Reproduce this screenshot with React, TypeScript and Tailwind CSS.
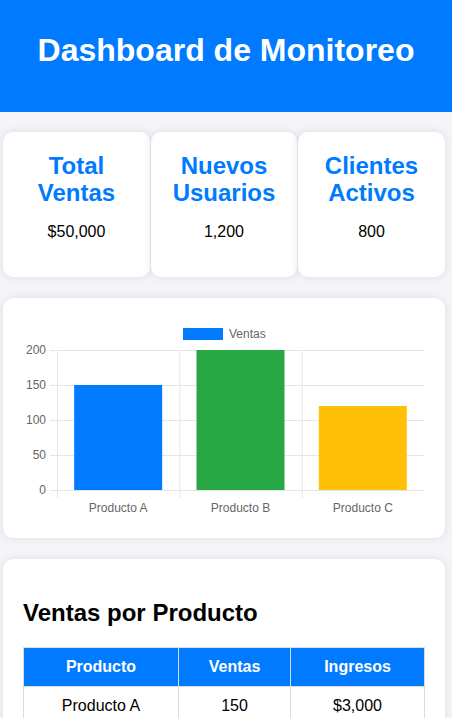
import React from 'react';

const stats = [
  { title: ['Total', 'Ventas'], value: '$50,000', width: 'w-[147px]' },
  { title: ['Nuevos', 'Usuarios'], value: '1,200', width: 'w-[146px]' },
  { title: ['Clientes', 'Activos'], value: '800', width: 'w-[147px]' },
];

const products = [
  { name: 'Producto A', sales: 150, revenue: '$3,000', color: '#007bff' },
  { name: 'Producto B', sales: 200, revenue: '$4,000', color: '#28a745' },
  { name: 'Producto C', sales: 120, revenue: '$2,400', color: '#ffc107' },
];

const StatCard: React.FC<{ title: string[]; value: string; width: string }> = ({ title, value, width }) => (
  <div className={`${width} bg-white rounded-[10px] shadow-[0_0_10px_rgba(0,0,0,0.1)] pt-5 pb-5 text-center`}>
    <h3 className="text-[24px] leading-[27.6px] font-bold text-[#007bff] mb-4">
      {title[0]}
      <br />
      {title[1]}
    </h3>
    <p className="text-[16px] leading-[18.4px] text-black mb-4">{value}</p>
  </div>
);

// chart coordinates are relative to the 402x200 canvas
const SalesChart: React.FC = () => {
  const left = 34;
  const right = 401;
  const top = 32;
  const bottom = 172;
  const colW = (right - left) / 3;
  const yFor = (v: number) => bottom - (v / 200) * (bottom - top);
  const ticks = [0, 50, 100, 150, 200];

  return (
    <svg width="402" height="200" viewBox="0 0 402 200" className="block">
      {/* legend */}
      <rect x="160" y="10" width="40" height="12" fill="#007bff" />
      <text x="206" y="20" fontSize="12" fill="#666" fontFamily="'Liberation Sans', Arial, sans-serif">
        Ventas
      </text>

      {/* horizontal grid */}
      {ticks.map((t) => (
        <g key={t}>
          <line x1={left - 7} x2={right} y1={yFor(t) + 0.5} y2={yFor(t) + 0.5} stroke="#e5e5e5" strokeWidth="1" />
          <text
            x={left - 11}
            y={yFor(t) + 4}
            fontSize="12"
            fill="#666"
            textAnchor="end"
            fontFamily="'Liberation Sans', Arial, sans-serif"
          >
            {t}
          </text>
        </g>
      ))}

      {/* vertical grid */}
      {[0, 1, 2].map((i) => (
        <line
          key={i}
          x1={left + i * colW + 0.5}
          x2={left + i * colW + 0.5}
          y1={top}
          y2={bottom + 8}
          stroke="#e5e5e5"
          strokeWidth="1"
        />
      ))}

      {products.map((p, i) => {
        const cx = left + colW * i + colW / 2;
        const y = yFor(p.sales);
        return (
          <g key={p.name}>
            <rect x={cx - 44} y={y} width="88" height={bottom - y} fill={p.color} />
            <text
              x={cx}
              y={bottom + 22}
              fontSize="12"
              fill="#666"
              textAnchor="middle"
              fontFamily="'Liberation Sans', Arial, sans-serif"
            >
              {p.name}
            </text>
          </g>
        );
      })}
    </svg>
  );
};

const App: React.FC = () => {
  return (
    <div className="min-h-screen bg-[#f4f4f9] font-['Liberation_Sans',Arial,sans-serif]">
      <header className="bg-[#007bff] pt-[32px] pb-[43px] text-center">
        <h1 className="text-[32px] leading-[36.8px] font-bold text-white">Dashboard de Monitoreo</h1>
      </header>

      <div className="ml-[3px] w-[442px] pt-[20px] pb-5">
        <div className="flex gap-px">
          {stats.map((s, i) => (
            <StatCard key={i} title={s.title} value={s.value} width={s.width} />
          ))}
        </div>

        <div className="mt-[21px] bg-white rounded-[10px] shadow-[0_0_10px_rgba(0,0,0,0.1)] p-5">
          <SalesChart />
        </div>

        <div className="mt-[21px] bg-white rounded-[10px] shadow-[0_0_10px_rgba(0,0,0,0.1)] p-5">
          <h2 className="text-[24px] leading-[27.6px] font-bold text-black my-5">Ventas por Producto</h2>
          <table className="w-full border-collapse text-[16px] leading-[18.4px]">
            <thead>
              <tr className="bg-[#007bff] text-white">
                <th className="w-[155px] border border-[#ddd] p-[10px] font-bold">Producto</th>
                <th className="w-[112px] border border-[#ddd] p-[10px] font-bold">Ventas</th>
                <th className="border border-[#ddd] p-[10px] font-bold">Ingresos</th>
              </tr>
            </thead>
            <tbody>
              {products.map((p) => (
                <tr key={p.name} className="text-black text-center">
                  <td className="border border-[#ddd] p-[10px]">{p.name}</td>
                  <td className="border border-[#ddd] p-[10px]">{p.sales}</td>
                  <td className="border border-[#ddd] p-[10px]">{p.revenue}</td>
                </tr>
              ))}
            </tbody>
          </table>
        </div>
      </div>
    </div>
  );
};

export default App;
